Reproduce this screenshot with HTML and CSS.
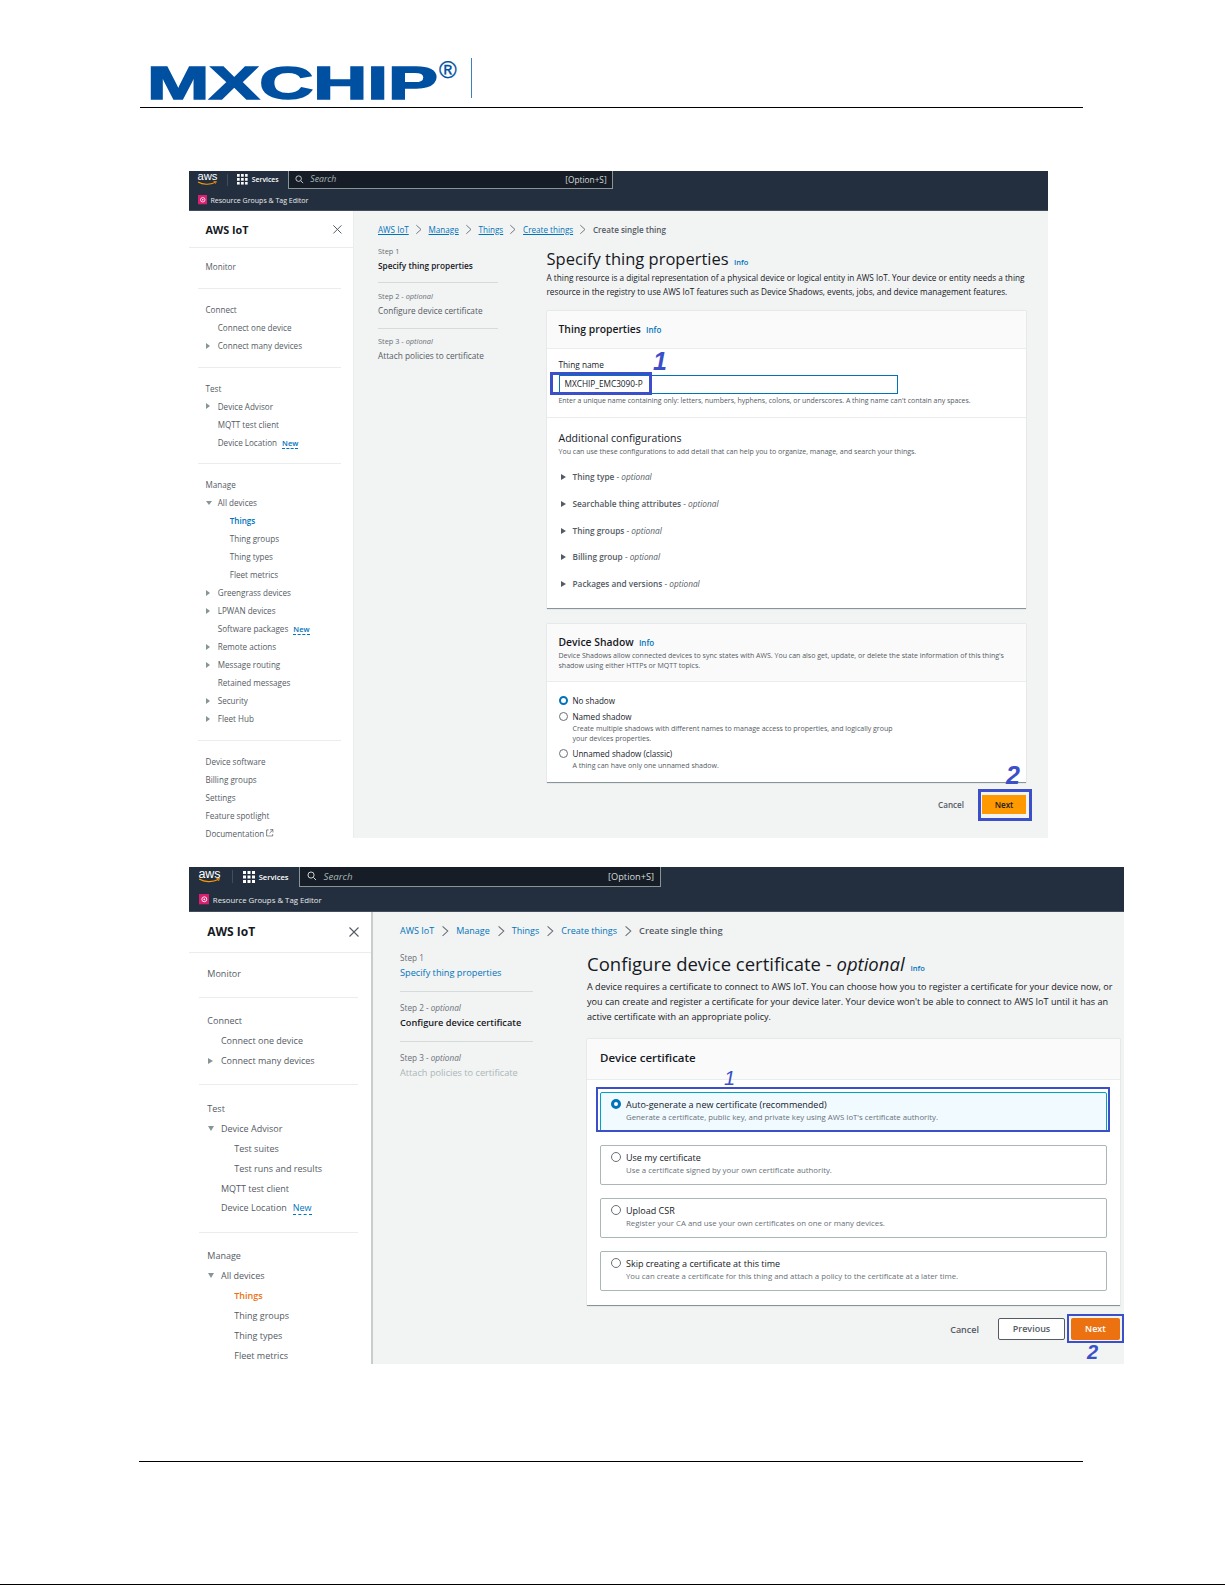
FILE: index.html
```html
<!DOCTYPE html>
<html lang="en">
<head>
	<meta charset="utf-8">
	<title>MXCHIP - Create single thing</title>
	<link rel="stylesheet" href="styles.css">
</head>

<body>
	<svg class="defs" width="0" height="0">
		<symbol id="i-chev" viewBox="0 0 10 14"><path d="M2 1.500 8 7 2 12.500" fill="none" stroke="#687078" stroke-width="1.200"/></symbol>
		<symbol id="i-close" viewBox="0 0 12 12"><path d="M1.500 1.500 10.500 10.500M10.500 1.500 1.500 10.500" fill="none" stroke="#545b64" stroke-width="1.100"/></symbol>
		<symbol id="i-grid" viewBox="0 0 12 12"><path d="M0 0h3v3H0zM4.500 0h3v3h-3zM9 0h3v3H9zM0 4.500h3v3H0zM4.500 4.500h3v3h-3zM9 4.500h3v3H9zM0 9h3v3H0zM4.500 9h3v3h-3zM9 9h3v3H9z" fill="#fff"/></symbol>
		<symbol id="i-search" viewBox="0 0 12 12"><circle cx="5" cy="5" r="3.800" fill="none" stroke="#d5dbdb" stroke-width="1.200"/><path d="M8 8l3.300 3.300" stroke="#d5dbdb" stroke-width="1.200"/></symbol>
		<symbol id="i-res" viewBox="0 0 12 12"><rect width="12" height="12" fill="#d91f6f"/><circle cx="6" cy="6" r="2.800" fill="none" stroke="#fff" stroke-width="1"/><circle cx="6" cy="6" r="1" fill="#fff"/></symbol>
		<symbol id="i-smile" viewBox="0 0 40 10"><path d="M2 1.500c9 5.500 23 6 33 .8" fill="none" stroke="#f90" stroke-width="2"/><path d="M32 .5l5-.3-1.500 4.500" fill="none" stroke="#f90" stroke-width="1.600"/></symbol>
		<symbol id="i-ext" viewBox="0 0 12 12"><path d="M4 1.500H1v9.500h9.500V8M6.500 1H11v4.500M11 1 5.500 6.500" fill="none" stroke="#545b64" stroke-width="1.200"/></symbol>
	</svg>

	<div class="doc-head">
		<svg class="logo" viewBox="0 0 320 62" width="320" height="62">
			<text class="logo-word" x="1" y="47" font-size="46" textLength="291" lengthAdjust="spacingAndGlyphs">MXCHIP</text>
			<text class="logo-reg" x="293" y="26" font-size="24">®</text>
		</svg>
		<span class="doc-rule"></span>
	</div>

	<!-- first screenshot -->
	<section class="shot shot-a">
		<div class="nav-top">
			<span class="aws">aws<svg class="smile"><use href="#i-smile"/></svg></span>
			<span class="nav-sep"></span>
			<svg class="grid"><use href="#i-grid"/></svg>
			<span class="services">Services</span>
			<div class="search">
				<svg class="mag"><use href="#i-search"/></svg>
				<em>Search</em>
				<span class="shortcut">[Option+S]</span>
			</div>
		</div>
		<div class="nav-sub">
			<svg class="res"><use href="#i-res"/></svg>
			<span>Resource Groups &amp; Tag Editor</span>
		</div>
		<div class="body">
			<aside class="side">
				<div class="side-head"><strong>AWS IoT</strong><svg class="close"><use href="#i-close"/></svg></div>
				<div class="side-nav">
					<a class="row">Monitor</a>
					<hr>
					<a class="row">Connect</a>
					<a class="row l1">Connect one device</a>
					<a class="row l1 closed">Connect many devices</a>
					<hr>
					<a class="row">Test</a>
					<a class="row l1 closed">Device Advisor</a>
					<a class="row l1">MQTT test client</a>
					<a class="row l1">Device Location <b class="new">New</b></a>
					<hr>
					<a class="row">Manage</a>
					<a class="row l1 open">All devices</a>
					<a class="row l2 active">Things</a>
					<a class="row l2">Thing groups</a>
					<a class="row l2">Thing types</a>
					<a class="row l2">Fleet metrics</a>
					<a class="row l1 closed">Greengrass devices</a>
					<a class="row l1 closed">LPWAN devices</a>
					<a class="row l1">Software packages <b class="new">New</b></a>
					<a class="row l1 closed">Remote actions</a>
					<a class="row l1 closed">Message routing</a>
					<a class="row l1">Retained messages</a>
					<a class="row l1 closed">Security</a>
					<a class="row l1 closed">Fleet Hub</a>
					<hr>
					<a class="row">Device software</a>
					<a class="row">Billing groups</a>
					<a class="row">Settings</a>
					<a class="row">Feature spotlight</a>
					<a class="row">Documentation <svg class="ext"><use href="#i-ext"/></svg></a>
				</div>
			</aside>
			<main class="main">
				<nav class="crumbs">
					<a>AWS IoT</a><svg class="chev"><use href="#i-chev"/></svg>
					<a>Manage</a><svg class="chev"><use href="#i-chev"/></svg>
					<a>Things</a><svg class="chev"><use href="#i-chev"/></svg>
					<a>Create things</a><svg class="chev"><use href="#i-chev"/></svg>
					<span>Create single thing</span>
				</nav>
				<div class="wizard">
					<ol class="steps">
						<li><small>Step 1</small><strong>Specify thing properties</strong></li>
						<li><small>Step 2 - <i>optional</i></small><span>Configure device certificate</span></li>
						<li><small>Step 3 - <i>optional</i></small><span>Attach policies to certificate</span></li>
					</ol>
					<div class="content">
						<h1>Specify thing properties <a class="info">Info</a></h1>
						<p class="lead">A thing resource is a digital representation of a physical device or logical entity in AWS IoT. Your device or entity needs a thing<br>resource in the registry to use AWS IoT features such as Device Shadows, events, jobs, and device management features.</p>

						<div class="card">
							<div class="card-head"><h2>Thing properties <a class="info">Info</a></h2></div>
							<div class="field">
								<label>Thing name</label>
								<div class="input">MXCHIP_EMC3090-P</div>
								<p class="help">Enter a unique name containing only: letters, numbers, hyphens, colons, or underscores. A thing name can't contain any spaces.</p>
							</div>
							<div class="extra">
								<h3>Additional configurations</h3>
								<p class="help">You can use these configurations to add detail that can help you to organize, manage, and search your things.</p>
								<ul class="expand">
									<li><b>Thing type</b> - <i>optional</i></li>
									<li><b>Searchable thing attributes</b> - <i>optional</i></li>
									<li><b>Thing groups</b> - <i>optional</i></li>
									<li><b>Billing group</b> - <i>optional</i></li>
									<li><b>Packages and versions</b> - <i>optional</i></li>
								</ul>
							</div>
						</div>

						<div class="card card-shadow">
							<div class="card-head">
								<h2>Device Shadow <a class="info">Info</a></h2>
								<p class="help">Device Shadows allow connected devices to sync states with AWS. You can also get, update, or delete the state information of this thing's<br>shadow using either HTTPs or MQTT topics.</p>
							</div>
							<div class="radios">
								<div class="radio-row"><span class="radio on"></span><div><span class="radio-label">No shadow</span></div></div>
								<div class="radio-row"><span class="radio"></span><div><span class="radio-label">Named shadow</span><p class="help">Create multiple shadows with different names to manage access to properties, and logically group<br>your devices properties.</p></div></div>
								<div class="radio-row"><span class="radio"></span><div><span class="radio-label">Unnamed shadow (classic)</span><p class="help">A thing can have only one unnamed shadow.</p></div></div>
							</div>
						</div>

						<div class="actions">
							<span class="cancel">Cancel</span>
							<span class="btn primary">Next</span>
						</div>
					</div>
				</div>
			</main>
		</div>
		<span class="mark box-name"></span>
		<span class="num num-name">1</span>
		<span class="mark box-next"></span>
		<span class="num num-next">2</span>
	</section>

	<!-- second screenshot -->
	<section class="shot shot-b">
		<div class="nav-top">
			<span class="aws">aws<svg class="smile"><use href="#i-smile"/></svg></span>
			<span class="nav-sep"></span>
			<svg class="grid"><use href="#i-grid"/></svg>
			<span class="services">Services</span>
			<div class="search">
				<svg class="mag"><use href="#i-search"/></svg>
				<em>Search</em>
				<span class="shortcut">[Option+S]</span>
			</div>
		</div>
		<div class="nav-sub">
			<svg class="res"><use href="#i-res"/></svg>
			<span>Resource Groups &amp; Tag Editor</span>
		</div>
		<div class="body">
			<aside class="side">
				<div class="side-head"><strong>AWS IoT</strong><svg class="close"><use href="#i-close"/></svg></div>
				<div class="side-nav">
					<a class="row">Monitor</a>
					<hr>
					<a class="row">Connect</a>
					<a class="row l1">Connect one device</a>
					<a class="row l1 closed">Connect many devices</a>
					<hr>
					<a class="row">Test</a>
					<a class="row l1 open">Device Advisor</a>
					<a class="row l2">Test suites</a>
					<a class="row l2">Test runs and results</a>
					<a class="row l1">MQTT test client</a>
					<a class="row l1">Device Location <b class="new">New</b></a>
					<hr>
					<a class="row">Manage</a>
					<a class="row l1 open">All devices</a>
					<a class="row l2 active">Things</a>
					<a class="row l2">Thing groups</a>
					<a class="row l2">Thing types</a>
					<a class="row l2">Fleet metrics</a>
				</div>
			</aside>
			<main class="main">
				<nav class="crumbs">
					<a>AWS IoT</a><svg class="chev"><use href="#i-chev"/></svg>
					<a>Manage</a><svg class="chev"><use href="#i-chev"/></svg>
					<a>Things</a><svg class="chev"><use href="#i-chev"/></svg>
					<a>Create things</a><svg class="chev"><use href="#i-chev"/></svg>
					<span>Create single thing</span>
				</nav>
				<div class="wizard">
					<ol class="steps">
						<li><small>Step 1</small><a>Specify thing properties</a></li>
						<li><small>Step 2 - <i>optional</i></small><strong>Configure device certificate</strong></li>
						<li class="off"><small>Step 3 - <i>optional</i></small><span>Attach policies to certificate</span></li>
					</ol>
					<div class="content">
						<h1>Configure device certificate - <i>optional</i> <a class="info">Info</a></h1>
						<p class="lead">A device requires a certificate to connect to AWS IoT. You can choose how you to register a certificate for your device now, or<br>you can create and register a certificate for your device later. Your device won't be able to connect to AWS IoT until it has an<br>active certificate with an appropriate policy.</p>

						<div class="card">
							<div class="card-head"><h2>Device certificate</h2></div>
							<div class="tiles">
								<div class="tile on"><span class="radio on"></span><div><span class="radio-label">Auto-generate a new certificate (recommended)</span><p class="help">Generate a certificate, public key, and private key using AWS IoT's certificate authority.</p></div></div>
								<div class="tile"><span class="radio"></span><div><span class="radio-label">Use my certificate</span><p class="help">Use a certificate signed by your own certificate authority.</p></div></div>
								<div class="tile"><span class="radio"></span><div><span class="radio-label">Upload CSR</span><p class="help">Register your CA and use your own certificates on one or many devices.</p></div></div>
								<div class="tile"><span class="radio"></span><div><span class="radio-label">Skip creating a certificate at this time</span><p class="help">You can create a certificate for this thing and attach a policy to the certificate at a later time.</p></div></div>
							</div>
						</div>

						<div class="actions">
							<span class="cancel">Cancel</span>
							<span class="btn">Previous</span>
							<span class="btn primary">Next</span>
						</div>
					</div>
				</div>
			</main>
		</div>
		<span class="mark box-tile"></span>
		<span class="num num-tile">1</span>
		<span class="mark box-next"></span>
		<span class="num num-next">2</span>
	</section>

	<div class="doc-foot"></div>
	<div class="doc-end"></div>
</body>

</html>
```

FILE: styles.css
```css
html {
	box-sizing: border-box;
}
*,
*::before,
*::after {
	box-sizing: inherit;
}

body {
	background-color: #fff;
	color: #16191f;
	font-family: "Open Sans", "Noto Sans", sans-serif;
	margin: 0;
	padding: 0;
	height: 1585px;
	overflow: hidden;
}

h1, h2, h3, p, ol, ul {
	margin: 0;
	padding: 0;
}

ol, ul {
	list-style: none;
}

.defs {
	position: absolute;
}

/* document chrome */
.doc-head {
	align-items: flex-start;
	border-bottom: 1px solid #000;
	display: flex;
	height: 108px;
	margin-left: 140px;
	padding: 52px 0 0 6px;
	width: 943px;
}

.logo {
	flex: none;
	margin-bottom: -10px;
}

.logo-word {
	fill: #0050a2;
	font-family: "Liberation Sans", sans-serif;
	font-weight: bold;
	stroke: #0050a2;
	stroke-width: 1.5px;
}

.logo-reg {
	fill: #0050a2;
	font-family: "Liberation Sans", sans-serif;
	stroke: #0050a2;
	stroke-width: .3px;
}

.doc-rule {
	border-left: 1px solid #3f80ba;
	height: 40px;
	margin: 6px 0 0 5px;
}

.doc-foot {
	border-top: 1px solid #000;
	margin: 97px 0 0 139px;
	width: 944px;
}

.doc-end {
	border-top: 1px solid #000;
	margin-top: 122px;
}

/* one screenshot, everything inside scales with its font-size */
.shot {
	background-color: #f2f3f3;
	display: flex;
	flex-direction: column;
	margin-left: 189px;
	overflow: hidden;
	position: relative;
}

.shot-a {
	font-size: 9px;
	height: 667px;
	margin-top: 63px;
	width: 859px;
}

.shot-b {
	font-size: 10px;
	height: 497px;
	margin-top: 29px;
	width: 935px;
}

.nav-top {
	align-items: center;
	background-color: #232f3e;
	color: #fff;
	display: flex;
	flex: none;
	height: 1.95em;
}

.aws {
	flex: none;
	font-family: "Liberation Sans", sans-serif;
	font-size: 1.25em;
	line-height: .8em;
	margin-left: .75em;
	position: relative;
	top: -.25em;
	width: 1.85em;
}

.smile {
	height: .5em;
	left: -.05em;
	position: absolute;
	top: .72em;
	width: 1.85em;
}

.nav-sep {
	border-left: 1px solid #414d5c;
	height: 1.3em;
	margin: 0 1em 0 1em;
}

.grid {
	flex: none;
	height: 1.2em;
	width: 1.2em;
}

.services {
	font-size: .76em;
	font-weight: 600;
	margin: 0 1.35em 0 .55em;
}

.search {
	align-items: center;
	background-color: #161d26;
	border: 1px solid #879596;
	border-top: 0;
	color: #d5dbdb;
	display: flex;
	font-size: .97em;
	height: 100%;
	padding: 0 .6em 0 .75em;
}

.shot-a .search {
	width: 325px;
}

.shot-b .search {
	width: 362px;
}

.mag {
	flex: none;
	height: 1em;
	margin-right: .7em;
	width: 1em;
}

.search em {
	color: #aab7b8;
}

.shortcut {
	font-size: .95em;
	margin-left: auto;
}

.nav-sub {
	align-items: center;
	background-color: #232f3e;
	border-bottom: 1px solid #414d5c;
	color: #e8eaea;
	display: flex;
	flex: none;
	font-size: .78em;
	height: 3.22em;
	padding: .25em 0 0 1.25em;
}

.res {
	flex: none;
	height: 1.36em;
	margin-right: .45em;
	width: 1.36em;
}

.body {
	display: flex;
	flex: 1;
	min-height: 0;
}

/* left navigation */
.side {
	background-color: #fff;
	border-right: 1px solid #eaeded;
	flex: none;
}

.shot-a .side {
	width: 165px;
}

.shot-b .side {
	border-right: 2px solid #c8cccc;
	width: 184px;
}

.side-head {
	align-items: center;
	border-bottom: 1px solid #eaeded;
	display: flex;
	font-size: 1.2em;
	height: 3.44em;
	justify-content: space-between;
	padding: 0 .95em 0 1.52em;
}

.close {
	height: 1em;
	width: 1em;
}

.side-nav {
	padding-top: 1.1em;
}

.side-nav hr {
	border: 0;
	border-top: 1px solid #eaeded;
	margin: 1.32em 1.3em 1.32em 1em;
}

.row {
	color: #545b64;
	display: block;
	font-size: .9em;
	height: 2.222em;
	line-height: 2.222em;
	padding-left: 2.04em;
	position: relative;
	white-space: nowrap;
}

.l1 {
	padding-left: 3.55em;
}

.l2 {
	padding-left: 5.03em;
}

.active {
	color: #0073bb;
	font-weight: 600;
}

.shot-b .active {
	color: #ec7211;
}

.closed::before,
.open::before {
	border-style: solid;
	content: "";
	left: 2.1em;
	position: absolute;
}

.closed::before {
	border-color: transparent transparent transparent #879596;
	border-width: .42em 0 .42em .6em;
	top: .7em;
}

.open::before {
	border-color: #879596 transparent transparent;
	border-width: .6em .42em 0;
	top: .8em;
}

.new {
	border-bottom: 1px dashed #0073bb;
	color: #0073bb;
	font-size: .92em;
	font-weight: 600;
	margin-left: .4em;
}

.shot-b .new {
	font-size: 1em;
	font-weight: 400;
}

.ext {
	height: .95em;
	vertical-align: -.05em;
	width: .95em;
}

/* page column */
.main {
	flex: 1;
	min-width: 0;
}

.shot-a .main {
	padding: 10px 22px 0 24px;
}

.shot-b .main {
	padding: 11px 4px 0 27px;
}

.crumbs {
	align-items: center;
	color: #545b64;
	display: flex;
	font-size: .9em;
	font-weight: 600;
	height: 16px;
	white-space: nowrap;
}

.crumbs a {
	color: #0073bb;
	font-weight: 400;
}

.shot-a .crumbs a {
	text-decoration: underline;
}

.shot-b .crumbs span {
	font-size: 1.03em;
}

.chev {
	flex: none;
	height: 1.35em;
	margin: 0 .65em;
	width: 1.15em;
}

.wizard {
	display: grid;
}

.shot-a .wizard {
	column-gap: 48.500px;
	grid-template-columns: 120px 1fr;
	margin-top: 8px;
}

.shot-b .wizard {
	column-gap: 54px;
	grid-template-columns: 133px 1fr;
	margin-top: 11px;
}

.steps li {
	border-bottom: 1px solid #d5dbdb;
	font-size: 1em;
	margin-bottom: .75em;
	padding-bottom: 1.05em;
}

.steps li:last-child {
	border-bottom: 0;
}

.steps small,
.steps strong,
.steps span,
.steps a {
	display: block;
	line-height: 1.55em;
	white-space: nowrap;
}

.steps small {
	color: #687078;
	font-size: .82em;
	line-height: 1.89em;
}

.steps span,
.steps a,
.steps strong {
	font-size: .92em;
	line-height: 1.685em;
}

.steps span {
	color: #545b64;
}

.steps a {
	color: #0073bb;
}

.steps strong {
	font-weight: 600;
}

.steps .off span {
	color: #aab7b8;
}

h1 {
	font-weight: 400;
	white-space: nowrap;
}

.shot-a h1 {
	font-size: 16.500px;
	line-height: 18px;
	padding-top: 5px;
}

.shot-b h1 {
	font-size: 18.500px;
	line-height: 21px;
	padding-top: 3px;
}

.info {
	color: #0073bb;
	font-size: 7.500px;
	font-style: normal;
	font-weight: 600;
	margin-left: 1px;
}

h2 .info {
	font-size: 8px;
	margin-left: 2.500px;
}

.lead {
	color: #16191f;
	font-size: .915em;
	white-space: nowrap;
}

.shot-a .lead {
	line-height: 14px;
}

.shot-b .lead {
	font-size: .908em;
	line-height: 15px;
}

.card {
	background-color: #fff;
	border-bottom: 1px solid #879596;
	box-shadow: 0 0 1px #aab7b8;
}

.shot-a .card {
	margin-top: 11.500px;
}

.shot-b .card {
	margin-top: 15.500px;
}

.card-head {
	background-color: #fafafa;
	border-bottom: 1px solid #eaeded;
	padding: 0 12px;
}

.shot-a .card-head {
	height: 38px;
	line-height: 36px;
}

.shot-b .card-head {
	height: 41px;
	line-height: 38px;
	padding: 0 13px;
}

h2 {
	font-size: 1.15em;
	font-weight: 600;
}

.card-shadow {
	margin-top: 15px !important;
}

.card-shadow .card-head {
	height: 58px !important;
	line-height: 14px !important;
	padding-top: 11px;
}

.card-shadow h2 {
	height: 16px;
}

.help {
	color: #545b64;
	font-size: .78em;
	line-height: 1.42em;
	white-space: nowrap;
}

.shot-b .help {
	line-height: 1.2em;
}

.field {
	border-bottom: 1px solid #eaeded;
	height: 69px;
	padding: 10px 12px 0;
}

.field label {
	display: block;
	font-size: .92em;
	height: 16px;
	line-height: 12px;
}

.input {
	border: 1.500px solid #0073bb;
	font-size: .92em;
	height: 19px;
	line-height: 16px;
	padding-left: 5px;
	width: 339px;
}

.field .help {
	font-size: .77em;
	line-height: 13px;
}

.extra {
	padding: 13px 12px 0;
	height: 190px;
}

h3 {
	font-size: 1.17em;
	font-weight: 400;
	line-height: 14px;
}

.extra .help {
	line-height: 12px;
}

.expand {
	margin-top: 7.700px;
}

.expand li {
	color: #545b64;
	font-size: .92em;
	height: 26.600px;
	line-height: 26.600px;
	padding-left: 14px;
	position: relative;
	white-space: nowrap;
}

.expand li::before {
	border-color: transparent transparent transparent #545b64;
	border-style: solid;
	border-width: 3.500px 0 3.500px 5px;
	content: "";
	left: 2px;
	position: absolute;
	top: 10px;
}

.expand b {
	font-weight: 600;
}

.radios {
	padding: 13px 12px 12px;
}

.radio-row {
	display: flex;
	gap: 5px;
	margin-bottom: 4.500px;
}

.radio-row:last-child {
	margin-bottom: 0;
}

.radio {
	background-color: #fff;
	border: 1px solid #687078;
	border-radius: 50%;
	flex: none;
	height: 1em;
	margin-top: 1px;
	width: 1em;
}

.radio.on {
	border: .3em solid #0073bb;
}

.radio-label {
	display: block;
	font-size: .9em;
	line-height: 12px;
}

.radios .help {
	line-height: 10px;
}

.tiles {
	display: flex;
	flex-direction: column;
	gap: 13px;
	padding: 11.500px 13px 14.500px;
}

.tile {
	border: 1px solid #aab7b8;
	border-radius: 2px;
	display: flex;
	gap: 5px;
	height: 40px;
	padding: 5px 10px 0;
}

.tile.on {
	background-color: #f1faff;
	border-color: #00a1c9;
}

.tile .radio {
	margin-top: 1.500px;
}

.tile .radio-label {
	line-height: 13px;
}

.tile .help {
	color: #687078;
	line-height: 13px;
}

.actions {
	align-items: center;
	display: flex;
	font-size: .9em;
	font-weight: 600;
	justify-content: flex-end;
}

.shot-a .actions {
	gap: 18px;
	margin-top: 12px;
}

.shot-b .actions {
	gap: 6px;
	margin-top: 12px;
}

.cancel {
	color: #545b64;
}

.shot-b .cancel {
	margin-right: 13px;
}

.btn {
	background-color: #fff;
	border: 1px solid #545b64;
	border-radius: 2px;
	color: #545b64;
	height: 22px;
	line-height: 20px;
	text-align: center;
	width: 67px;
}

.primary {
	background-color: #ec7211;
	border: 0;
	color: #fff;
	line-height: 22px;
	width: 49px;
}

.shot-a .primary {
	background-color: #f90;
	border-radius: 0;
	color: #16191f;
	height: 19px;
	line-height: 19px;
	width: 44px;
}

/* annotations drawn over the screenshots */
.mark {
	border: 3px solid #3a4fc8;
	position: absolute;
}

.num {
	color: #3a4fc8;
	font-family: "Liberation Sans", sans-serif;
	font-style: italic;
	font-weight: bold;
	line-height: 1;
	position: absolute;
}

.shot-a .num {
	font-size: 25px;
}

.shot-b .num {
	font-size: 20px;
}

.shot-b .num-tile {
	font-weight: 400;
}

.box-name {
	height: 23px;
	left: 361px;
	top: 201px;
	width: 102px;
}

.num-name {
	left: 464px;
	top: 178px;
}

.shot-a .box-next {
	height: 32px;
	left: 789px;
	top: 618px;
	width: 54px;
}

.shot-a .num-next {
	left: 817px;
	top: 592px;
}

.box-tile {
	border-width: 2px;
	height: 45px;
	left: 407px;
	top: 220px;
	width: 514px;
}

.num-tile {
	left: 535px;
	top: 201px;
}

.shot-b .box-next {
	border-width: 2px;
	height: 29px;
	left: 878px;
	top: 447px;
	width: 57px;
}

.shot-b .num-next {
	left: 898px;
	top: 475px;
}
```
